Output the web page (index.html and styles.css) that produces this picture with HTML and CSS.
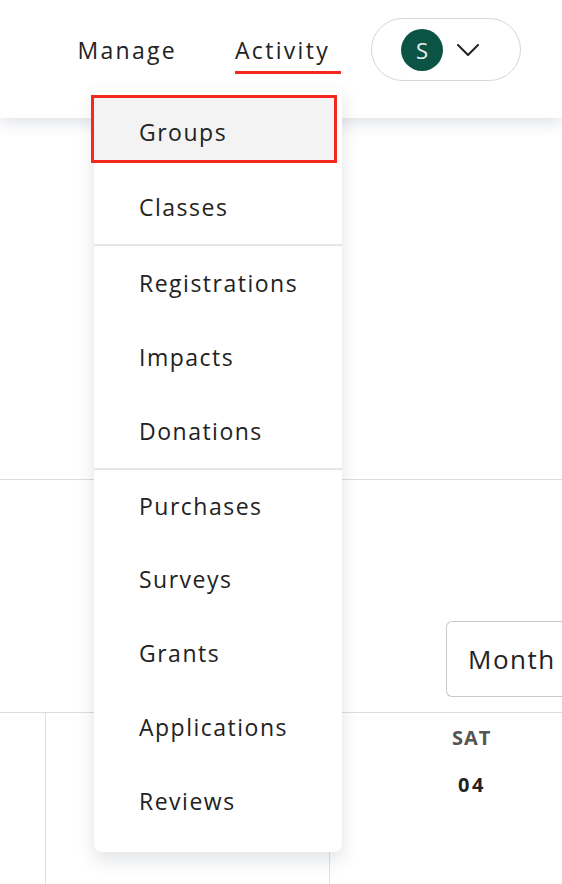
FILE: index.html
```html
<!DOCTYPE html>
<html lang="en">
<head>
<meta charset="utf-8">
<title>Activity menu</title>
<link rel="stylesheet" href="styles.css">
</head>
<body>
<header class="topbar">
  <nav class="nav">
    <a class="nav-link">Manage</a>
    <a class="nav-link nav-link--active">Activity</a>
    <button class="account">
      <span class="avatar">S</span>
      <svg class="chevron" width="22" height="12" viewBox="0 0 22 12"><path d="M1 1 L11 11 L21 1" fill="none" stroke="#222" stroke-width="2" stroke-linecap="round" stroke-linejoin="round"/></svg>
    </button>
  </nav>
</header>

<ul class="menu">
  <li class="menu-item menu-item--current">Groups</li>
  <li class="menu-item">Classes</li>
  <li class="menu-item menu-item--divided menu-item--first-group">Registrations</li>
  <li class="menu-item">Impacts</li>
  <li class="menu-item">Donations</li>
  <li class="menu-item menu-item--divided">Purchases</li>
  <li class="menu-item">Surveys</li>
  <li class="menu-item">Grants</li>
  <li class="menu-item">Applications</li>
  <li class="menu-item">Reviews</li>
</ul>

<main class="page">
  <section class="intro"></section>
  <section class="toolbar">
    <div class="view-select">Month</div>
  </section>
  <section class="calendar">
    <div class="day"></div>
    <div class="day"></div>
    <div class="day">
      <span class="day-name">SAT</span>
      <span class="day-num">04</span>
    </div>
  </section>
</main>
</body>
</html>
```

FILE: styles.css
```css
* { box-sizing: border-box; }

html, body {
  margin: 0;
  padding: 0;
  background: #ffffff;
  overflow: hidden;
  height: 884px;
}

body {
  font-family: "Open Sans", "Noto Sans", sans-serif;
  color: #222222;
  position: relative;
}

.topbar {
  height: 118px;
  background: #ffffff;
  box-shadow: 0 5px 14px rgba(40, 60, 90, 0.14);
  position: relative;
  z-index: 1;
}

.nav {
  height: 99px;
  display: flex;
  align-items: center;
  justify-content: flex-end;
  padding-right: 41px;
}

.nav-link {
  font-size: 23px;
  line-height: 32px;
  letter-spacing: 2.3px;
  color: #222222;
  padding: 8px 0 5px;
  border-bottom: 3px solid transparent;
}

.nav-link + .nav-link { margin-left: 58px; }

.nav-link--active {
  border-bottom-color: #f5281e;
  padding-right: 11px;
}

.account {
  margin-left: 30px;
  width: 150px;
  height: 63px;
  border: 1px solid #d6d6d6;
  border-radius: 32px;
  background: #ffffff;
  display: flex;
  align-items: center;
  padding: 0 0 0 29px;
  gap: 14px;
}

.avatar {
  width: 42px;
  height: 42px;
  border-radius: 50%;
  background: #0b5345;
  color: #e8f0ed;
  font-family: "Open Sans", sans-serif;
  font-size: 22px;
  display: flex;
  align-items: center;
  justify-content: center;
}

.chevron { display: block; }

.menu {
  position: absolute;
  left: 94px;
  top: 88px;
  width: 248px;
  margin: 0;
  padding: 7px 0 14px;
  list-style: none;
  background: #ffffff;
  border-radius: 0 0 8px 8px;
  box-shadow: 0 8px 18px rgba(40, 60, 80, 0.14);
  z-index: 2;
}

.menu-item {
  height: 74px;
  display: flex;
  align-items: center;
  padding-left: 45px;
  font-size: 23px;
  letter-spacing: 1.5px;
  color: #222222;
}

.menu-item--divided { border-top: 2px solid #e6e6e6; }

.menu-item--first-group { height: 76px; }

.menu-item--current {
  height: 68px;
  width: 246px;
  margin: 0 0 7px -3px;
  padding-left: 45px;
  padding-top: 6px;
  background: #f3f3f3;
  border: 3px solid #f5281e;
}

.page {
  display: flex;
  flex-direction: column;
  overflow: hidden;
}

.intro {
  height: 362px;
  border-bottom: 1px solid #dcdcdc;
}

.toolbar {
  height: 233px;
  border-bottom: 1px solid #dcdcdc;
  display: flex;
  justify-content: flex-end;
  align-items: flex-start;
  padding-top: 141px;
}

.view-select {
  width: 116px;
  height: 76px;
  border: 1px solid #c9c9c9;
  border-right: none;
  border-radius: 6px 0 0 6px;
  display: flex;
  align-items: center;
  padding-left: 21px;
  font-size: 26px;
  letter-spacing: 1.5px;
  color: #222222;
  white-space: nowrap;
  overflow: hidden;
}

.calendar {
  display: grid;
  grid-template-columns: 46px 284px 232px;
  height: 200px;
}

.day {
  display: flex;
  flex-direction: column;
  align-items: center;
  padding-top: 12px;
}

.day:nth-child(1),
.day:nth-child(2) { border-right: 1px solid #e0e0e0; }

.day:nth-child(3) {
  align-items: flex-start;
  padding-left: 122px;
}

.day-name {
  font-size: 20px;
  font-weight: 700;
  letter-spacing: 1px;
  color: #555555;
  line-height: 26px;
}

.day-num {
  margin-top: 21px;
  margin-left: 6px;
  font-size: 20px;
  font-weight: 700;
  letter-spacing: 2.5px;
  color: #222222;
  line-height: 26px;
}
```
